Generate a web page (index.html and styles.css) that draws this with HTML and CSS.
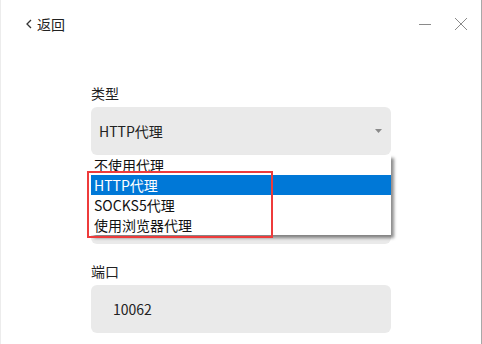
FILE: index.html
```html
<!DOCTYPE html>
<html lang="zh-CN">
<head>
<meta charset="utf-8">
<title>代理设置</title>
<link rel="stylesheet" href="styles.css">
</head>
<body>
<div class="window">
  <header class="titlebar">
    <div class="back">
      <svg class="back-icon" width="6" height="10" viewBox="0 0 6 10"><polyline points="5,1 1,5 5,9" fill="none" stroke="#333" stroke-width="1.3"/></svg>
      <span class="back-text">返回</span>
    </div>
    <div class="controls">
      <svg class="ctl" width="14" height="14" viewBox="0 0 14 14"><line x1="1" y1="7.5" x2="13" y2="7.5" stroke="#8a8a8a" stroke-width="1"/></svg>
      <svg class="ctl" width="14" height="14" viewBox="0 0 14 14"><line x1="1" y1="1" x2="13" y2="13" stroke="#8a8a8a" stroke-width="1"/><line x1="13" y1="1" x2="1" y2="13" stroke="#8a8a8a" stroke-width="1"/></svg>
    </div>
  </header>
  <main class="form">
    <div class="field">
      <div class="label">类型</div>
      <div class="select-wrap">
        <div class="input select">
          <span>HTTP代理</span>
          <svg class="arrow" width="7" height="4" viewBox="0 0 7 4"><polygon points="0,0 7,0 3.5,4" fill="#8a8a8a"/></svg>
        </div>
        <ul class="dropdown">
          <li class="opt">不使用代理</li>
          <li class="opt active">HTTP代理</li>
          <li class="opt">SOCKS5代理</li>
          <li class="opt">使用浏览器代理</li>
        </ul>
        <div class="mark"></div>
      </div>
    </div>
    <div class="field">
      <div class="label"></div>
      <div class="input text"></div>
    </div>
    <div class="field">
      <div class="label">端口</div>
      <div class="input text">10062</div>
    </div>
  </main>
</div>
</body>
</html>
```
FILE: styles.css
```css
* { box-sizing: border-box; }
html, body { margin: 0; padding: 0; background: #fff; }
body { font-family: "Noto Sans CJK SC", "Noto Sans", sans-serif; color: #222; font-size: 14px; }
.window {
  width: 482px; height: 344px; overflow: hidden;
  border-left: 1px solid #ececec; border-right: 1px solid #a8a8a8;
}
.titlebar {
  height: 48px; display: flex; align-items: center; justify-content: space-between;
  padding: 0 13px 0 25px;
}
.back { display: flex; align-items: center; }
.back-icon { display: block; }
.back-text { margin-left: 5px; font-size: 14px; line-height: 20px; color: #222; }
.controls { display: flex; gap: 22px; align-items: center; }
.ctl { display: block; }
.form { padding: 35px 0 0 90px; width: 390px; }
.field { margin-bottom: 17px; }
.label { height: 20px; line-height: 20px; margin-bottom: 4px; font-size: 14px; color: #222; }
.input {
  height: 48px; border-radius: 6px; background: #eaeaea; display: flex; align-items: center;
  font-size: 14px; color: #222;
}
.select { padding: 0 8px; justify-content: space-between; }
.arrow { display: block; margin-right: 1px; }
.text { padding-left: 22px; }
.select-wrap { position: relative; }
.dropdown {
  position: absolute; left: 0; top: 100%; width: 300px; margin: 0; padding: 0; list-style: none;
  background: #fff; box-shadow: 3px 3px 3px rgba(0,0,0,0.45); z-index: 2;
}
.opt { height: 20px; line-height: 20px; padding-left: 3px; font-size: 14px; color: #111; }
.opt.active { background: #0078d7; color: #fff; }
.mark {
  position: absolute; left: -4px; top: 64px; width: 186px; height: 67px;
  border: 2px solid #ee3b3b; z-index: 3;
}
```
